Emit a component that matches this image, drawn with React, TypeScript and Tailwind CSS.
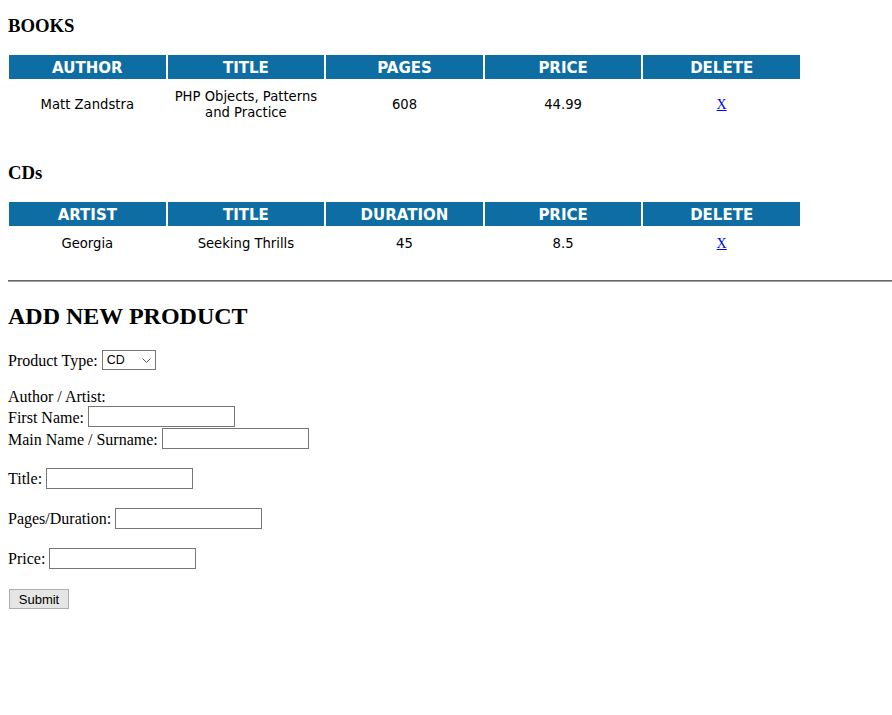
import { useState } from "react";

type Col = string;

const serif = "font-['Liberation_Serif',serif]";

function ProductTable({ cols, rows }: { cols: Col[]; rows: (string | number)[][] }) {
  return (
    <div className="ml-px grid grid-cols-[repeat(5,156.6px)] gap-[2px] font-['DejaVu_Sans',Verdana,sans-serif]">
      {cols.map((c) => (
        <div
          key={c}
          className="h-[24px] bg-[#0e6ea4] pt-px text-white font-bold text-[15px] leading-[24px] text-center"
        >
          {c}
        </div>
      ))}
      {rows.map((row, i) => (
        <div key={i} className="contents">
          {row.map((cell, j) => (
            <div
              key={j}
              className="flex items-center justify-center px-px pt-[8px] pb-[6px] text-center text-[13.2px] leading-[16px] text-black"
            >
              {cell}
            </div>
          ))}
          <div className="flex items-center justify-center pt-[8px] pb-[6px] text-center leading-[16px]">
            <a href="#" className={`${serif} text-[14px] text-[#0000ee] underline`}>
              X
            </a>
          </div>
        </div>
      ))}
    </div>
  );
}

function Field({ label, className, shift = "mt-[2px]" }: { label: string; className: string; shift?: string }) {
  return (
    <div className={`flex h-[21px] items-center ${className}`}>
      <span className={`${shift} leading-[18px]`}>{label}</span>
      <input
        type="text"
        className="ml-[4px] block h-[21px] w-[147px] border border-[#767676] bg-white px-[2px] text-[13px] outline-none"
      />
    </div>
  );
}

export default function App() {
  const [type, setType] = useState("CD");

  return (
    <div className={`min-h-[715px] bg-white pl-[8px] pt-[15px] text-black ${serif}`}>
      <h3 className="h-[21px] text-[18.72px] font-bold leading-[21px]">BOOKS</h3>
      <div className="mt-[19px]">
        <ProductTable
          cols={["AUTHOR", "TITLE", "PAGES", "PRICE", "DELETE"]}
          rows={[["Matt Zandstra", "PHP Objects, Patterns and Practice", 608, 44.99]]}
        />
      </div>

      <h3 className="mt-[35px] h-[21px] text-[18.72px] font-bold leading-[21px]">CDs</h3>
      <div className="mt-[19px]">
        <ProductTable
          cols={["ARTIST", "TITLE", "DURATION", "PRICE", "DELETE"]}
          rows={[["Georgia", "Seeking Thrills", 45, 8.5]]}
        />
      </div>

      <hr className="mt-[22px] h-[2px] border-0 border-t border-b border-t-[#666666] border-b-[#9a9a9a]" />

      <h2 className="mt-[21px] h-[27px] text-[24px] font-bold leading-[27px]">ADD NEW PRODUCT</h2>

      <form className="text-[16px]" onSubmit={(e) => e.preventDefault()}>
        <div className="mt-[20px] flex h-[20px] items-center">
          <span className="mt-[2px] leading-[18px]">Product Type:</span>
          <div className="relative ml-[4px] h-[20px] w-[54px]">
            <select
              value={type}
              onChange={(e) => setType(e.target.value)}
              className="block h-[20px] w-[54px] appearance-none border border-[#767676] bg-white pl-[4px] font-['Liberation_Sans',Arial,sans-serif] text-[12.5px] leading-[18px] outline-none"
            >
              <option>CD</option>
              <option>Book</option>
            </select>
            <svg
              className="pointer-events-none absolute right-[5px] top-[8px]"
              width="9"
              height="5"
              viewBox="0 0 9 5"
              fill="none"
            >
              <path d="M0.5 0.5 L4.5 4.5 L8.5 0.5" stroke="#555" strokeWidth="1" />
            </svg>
          </div>
        </div>

        <div className="mt-[18px] h-[18px] leading-[18px]">Author / Artist:</div>
        <Field label="First Name:" className="mt-0" />
        <Field label="Main Name / Surname:" className="mt-px" />

        <Field label="Title:" className="mt-[19px]" shift="mt-0" />
        <Field label="Pages/Duration:" className="mt-[19px]" shift="mt-0" />
        <Field label="Price:" className="mt-[19px]" shift="mt-0" />

        <button
          type="submit"
          className="ml-px mt-[20px] block h-[20px] w-[60px] border border-[#adadad] bg-[#e5e5e5] pt-px font-['Liberation_Sans',Arial,sans-serif] text-[13px] leading-[18px] text-black"
        >
          Submit
        </button>
      </form>
    </div>
  );
}
